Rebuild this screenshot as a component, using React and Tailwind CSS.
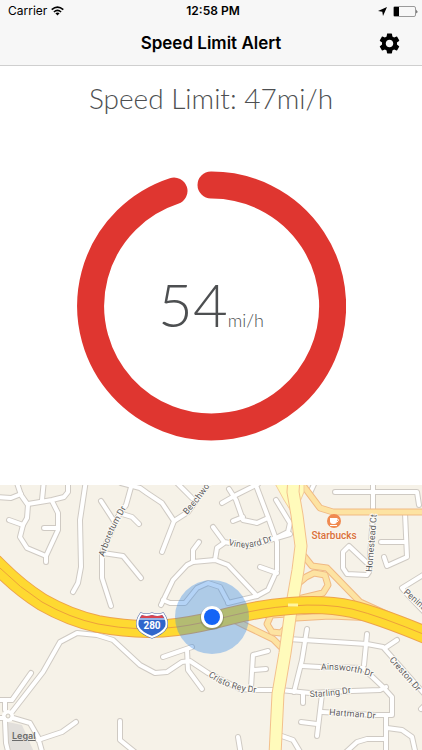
import { MdSettings } from 'react-icons/md'

const SPEED = 54
const LIMIT = 47

const streets = [
  'M16 480 L21 495 L28 505 L27 518 L23 525 L20 537 L27 548 L46 556',
  'M46 562 L46 556 L58 530 L58 513 L52 501',
  'M-4 497 L11 498 L21 494',
  'M28 504 L52 500 L64 497 L68 492 L68 480',
  'M44 480 L42 500',
  'M9 520 L23 525',
  'M44 528 L58 528',
  'M86 480 L80 520 L81 567 L78 583 L73 592',
  'M101 501 L114 521',
  'M133 480 L126 505 L117 518 L102 553 L102 578 L111 606',
  'M119 513 L132 517 L139 524',
  'M103 553 L123 556 L141 578',
  'M121 483 L140 488 L147 493 L162 503 L174 521 L162 552',
  'M174 521 L188 512 L211 480',
  'M176 482 L192 498',
  'M222 503 L236 495 L258 484',
  'M229 489 L236 500 L243 520 L257 523 L268 518',
  'M233 521 L243 517',
  'M254 480 L268 517 L277 542 L277 570 L268 590 L257 596 L228 603',
  'M213 527 L224 542 L248 546 L273 539 L290 534',
  'M224 543 L217 548 L215 560',
  'M161 605 L173 580 L187 565 L193 562 L215 560 L228 565 L257 596',
  'M199 542 L193 550 L193 562',
  'M163 600 L170 603 L185 603 L197 588 L208 583 L220 587 L228 602',
  'M260 567 L277 573',
  'M276 500 L290 523 L288 532 L278 537',
  'M316 480 L310 493',
  'M335 492 L417 492 L419 505',
  'M373 480 L373 515 L369 572 L367 575 L347 574 L343 568 L343 552 L349 546 L367 563',
  'M405 513 L407 557 L387 566 L384 557',
  'M381 542 L406 542',
  'M428 572 L402 588 L406 593 L428 616',
  'M-4 700 L12 700 L31 673',
  'M12 712 L43 672 L60 642 L77 633 L97 635 L113 640 L140 665 L155 673 L167 672 L182 662 L190 661 L208 673 L240 689 L253 690 L280 690',
  'M163 657 L192 647',
  'M187 650 L188 670 L202 689',
  'M251 688 L253 655 L268 651',
  'M253 670 L266 669',
  'M238 737 L241 755',
  'M5 700 L5 710 M-4 718 L3 718 M5 721 L6 743 L9 755',
  'M13 718 L30 723 L38 737 L43 755',
  'M38 740 L62 732 L76 722',
  'M120 721 L120 740 L136 753',
  'M288 639 L367 644 L383 647 L428 698',
  'M385 648 L397 640',
  'M307 629 L302 660 L294 692',
  'M367 634 L364 665',
  'M302 666 L320 667 L363 668 L383 687 L392 697 L392 715 L375 715 L322 712',
  'M280 690 L310 693 L352 691 L380 690 L386 687',
  'M303 693 L303 703',
  'M322 694 L317 736',
  'M301 722 L317 724',
  'M386 716 L386 755',
  'M387 728 L402 730 L412 737 L416 755',
  'M345 753 L357 742 L367 739 L386 739',
  'M276 734 L293 740 L302 755',
  'M428 702 L421 709',
]

const ramps = [
  'M302 484 L320 508 L333 512 L428 512',
  'M304 556 L312 566 L327 568 L360 602 L393 617',
  'M300 582 L306 577 L314 573 L325 575 L328 585 L323 593 L298 599',
  'M230 618 L246 626 L273 639 L284 650',
  'M288 614 L271 615 L267 624 L272 632 L281 633 L289 624',
  'M296 618 L330 616 L376 618',
]

const freeway =
  'M-6 562 L0 568 Q20 588 42 602 Q70 618 98 624 Q140 632 177 627 Q200 624 230 616 Q262 608 290 606 Q325 603 352 609 Q380 616 428 636'

const boulevard = 'M294 478 L293 492 L297 515 L301 546 L298 570 L291 610 L285 653 L278 694 L275 755'

function Roads({ paths, casing, fill, width }) {
  return (
    <g fill="none" strokeLinecap="round" strokeLinejoin="round">
      {paths.map(d => <path key={d} d={d} stroke={casing} strokeWidth={width + 2} />)}
      {paths.map(d => <path key={d} d={d} stroke={fill} strokeWidth={width} />)}
    </g>
  )
}

const labels = [
  { id: 'arboretum', text: 'Arboretum Dr', d: 'M104 557 L113 532 L129 503' },
  { id: 'beechwood', text: 'Beechwood', d: 'M187 515 L198 502 L222 470' },
  { id: 'vineyard', text: 'Vineyard Dr', d: 'M228 545 Q250 552 276 539' },
  { id: 'homestead', text: 'Homestead Ct', d: 'M372 572 L377 512' },
  { id: 'peninsula', text: 'Peninsula', d: 'M403 593 L440 625' },
  { id: 'cristo', text: 'Cristo Rey Dr', d: 'M208 676 Q228 691 258 693' },
  { id: 'ainsworth', text: 'Ainsworth Dr', d: 'M321 670 Q352 668 380 680' },
  { id: 'starling', text: 'Starling Dr', d: 'M310 697 Q330 697 356 692' },
  { id: 'hartman', text: 'Hartman Dr', d: 'M329 715 L380 719' },
  { id: 'creston', text: 'Creston Dr', d: 'M389 660 L426 702' },
]

function StreetMap() {
  return (
    <svg
      className="absolute inset-0 h-full w-full"
      viewBox="0 485 422 265"
      preserveAspectRatio="xMidYMid slice"
      role="img"
      aria-label="Map of the current location"
    >
      <rect x="-200" y="300" width="900" height="700" fill="#f6f2e8" />
      <path d="M8 722 L22 725 L34 752 L8 752 Z" fill="#e2dfdb" />

      <Roads paths={streets} casing="#cfcac3" fill="#ffffff" width={4} />
      <circle cx="8" cy="716" r="6" fill="#ffffff" />
      <circle cx="8" cy="716" r="2" fill="#f6f2e8" stroke="#cbc6be" />

      <Roads paths={ramps} casing="#f0b983" fill="#fde3a2" width={5} />
      <path d="M272 478 L284 500 L294 516 L304 492 L304 478 Z" fill="#fffbbb" stroke="#f3cc98" />
      <Roads paths={[boulevard]} casing="#f3c08c" fill="#fffbbb" width={11} />

      <g fill="none">
        <path d={freeway} stroke="#eda34c" strokeWidth="18" />
        <path d={freeway} stroke="#fed931" strokeWidth="16" />
        <path d={freeway} stroke="#eda03c" strokeWidth="1" />
      </g>
      <path d="M288 605 L298 605" stroke="#fff6a0" strokeWidth="3" />

      <g
        fontFamily="Roboto, sans-serif"
        fontSize="9"
        fill="#5f5e60"
        stroke="#fbf9f4"
        strokeWidth="2"
        paintOrder="stroke"
      >
        {labels.map(l => (
          <g key={l.id}>
            <path id={l.id} d={l.d} fill="none" stroke="none" />
            <text><textPath href={`#${l.id}`}>{l.text}</textPath></text>
          </g>
        ))}
      </g>

      {/* Coffee shop */}
      <circle cx="334" cy="521" r="7" fill="#f08a50" />
      <path d="M330 518 H337 V521 Q337 524 334 524 H333 Q330 524 330 521 Z" fill="#ffffff" />
      <path d="M337 519 H338 Q339 521 337 522 M330 525.500 H337" fill="none" stroke="#ffffff" />
      <text
        x="334" y="539" textAnchor="middle" fontFamily="Roboto, sans-serif" fontSize="10"
        fontWeight="500" fill="#d9703a" stroke="#fbf6ee" strokeWidth="2" paintOrder="stroke"
      >
        Starbucks
      </text>

      {/* Interstate shield */}
      <path
        d="M141 614 Q146 616 152 614 Q158 616 163 614 Q168 621 166 627 Q163 633 152 637 Q141 633 138 627 Q136 621 141 614 Z"
        fill="#2f66cc" stroke="#4a66a8" strokeWidth="3"
      />
      <path
        d="M141 614 Q146 616 152 614 Q158 616 163 614 Q168 621 166 627 Q163 633 152 637 Q141 633 138 627 Q136 621 141 614 Z"
        fill="#2f66cc" stroke="#ffffff" strokeWidth="2"
      />
      <path d="M142 615 Q147 617 152 615 Q157 617 162 615 L164 618 H140 Z" fill="#d8444f" />
      <path d="M139 619 H165" stroke="#ffffff" />
      <text
        x="152" y="629" textAnchor="middle" fontFamily="Roboto, sans-serif"
        fontSize="10" fontWeight="700" fill="#ffffff"
      >
        280
      </text>

      {/* Current position */}
      <circle cx="212" cy="617" r="37" fill="#2f86e6" fillOpacity="0.36" />
      <circle cx="212" cy="618" r="12" fill="#000000" fillOpacity="0.15" />
      <circle cx="212" cy="617" r="11" fill="#ffffff" />
      <circle cx="212" cy="617" r="8" fill="#1464f6" />
    </svg>
  )
}

function StatusBar() {
  return (
    <div className="grid h-[22px] grid-cols-3 items-center pr-1 pl-2 text-xs">
      <div className="flex items-center gap-1">
        <span>Carrier</span>
        <svg width="13" height="10" viewBox="0 0 13 10" fill="none" stroke="black" strokeWidth="1.6" aria-hidden="true">
          <path d="M0.700 3.600 Q6.500 -1.400 12.300 3.600" />
          <path d="M2.900 6 Q6.500 2.800 10.100 6" />
          <path d="M6.500 9.500 L4.400 7.300 Q6.500 5.700 8.600 7.300 Z" fill="black" stroke="none" />
        </svg>
      </div>
      <div className="text-center font-semibold">12:58 PM</div>
      <div className="flex items-center justify-end gap-1.5">
        <svg width="9" height="9" viewBox="0 0 9 9" aria-hidden="true">
          <path d="M9 0 L5 9 L4.300 4.700 L0 4 Z" />
        </svg>
        <svg width="25" height="11" viewBox="0 0 25 11" aria-hidden="true">
          <rect x="0.500" y="0.500" width="22" height="10" rx="1.500" fill="none" stroke="#9a9a9a" />
          <rect x="1" y="1" width="5" height="9" />
          <path d="M23.500 3.500 Q25 5.500 23.500 7.500 Z" />
        </svg>
      </div>
    </div>
  )
}

function SpeedGauge({ speed }) {
  return (
    <div className="relative flex size-[270px] items-center justify-center">
      <svg className="absolute inset-0" viewBox="0 0 270 270" aria-hidden="true">
        <path
          d="M135 14 A121 121 0 1 1 98 20"
          fill="none" stroke="#df3630" strokeWidth="27" strokeLinecap="round"
        />
      </svg>
      <div className="flex items-baseline pb-1 font-['Lato',sans-serif] text-[#4d4f51]">
        <span className="text-[60px] leading-none font-light">{speed}</span>
        <span className="text-lg font-light">mi/h</span>
      </div>
    </div>
  )
}

export default function App() {
  return (
    <div className="flex min-h-screen flex-col bg-white font-['Inter',sans-serif] text-black">
      <header className="border-b border-[#cfcfcf] bg-[#f7f7f7]">
        <StatusBar />
        <div className="grid h-[43px] grid-cols-[1fr_auto_1fr] items-center px-5">
          <h1 className="col-start-2 text-[17px] font-semibold">Speed Limit Alert</h1>
          <button type="button" aria-label="Settings" className="justify-self-end">
            <MdSettings size={25} />
          </button>
        </div>
      </header>

      <main className="flex flex-1 flex-col">
        <p className="pt-4 text-center font-['Lato',sans-serif] text-[28px] leading-8 font-light text-[#4d4f51]">
          Speed Limit: {LIMIT}mi/h
        </p>
        <div className="flex justify-center pt-[57px] pb-11">
          <SpeedGauge speed={SPEED} />
        </div>
        <section className="relative flex min-h-[265px] flex-1 flex-col justify-end overflow-hidden">
          <StreetMap />
          <a href="#legal" className="relative ml-3 self-start pb-2 text-[9px] leading-3 font-semibold text-[#6b6b6b] underline">
            Legal
          </a>
        </section>
      </main>
    </div>
  )
}
